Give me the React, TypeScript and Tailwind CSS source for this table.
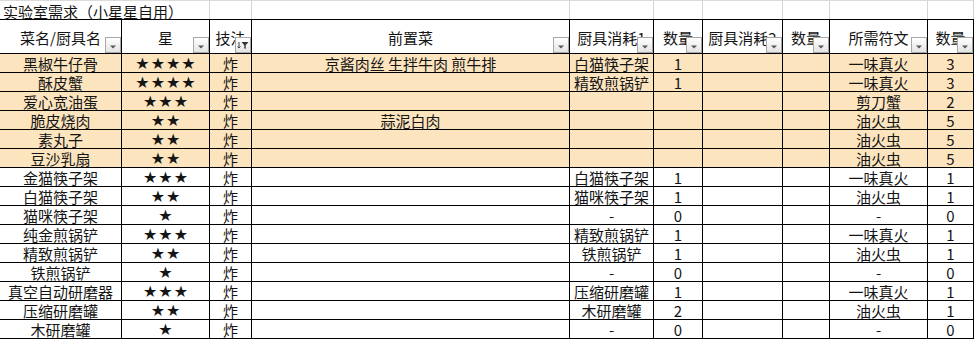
import React from "react";

type Row = {
  name: string;
  stars: number;
  method: string;
  pre: string;
  tool1: string;
  qty1: string;
  tool2: string;
  qty2: string;
  rune: string;
  runeQty: string;
  hl?: boolean;
};

const ROWS: Row[] = [
  { name: "黑椒牛仔骨", stars: 4, method: "炸", pre: "京酱肉丝 生拌牛肉 煎牛排", tool1: "白猫筷子架", qty1: "1", tool2: "", qty2: "", rune: "一味真火", runeQty: "3", hl: true },
  { name: "酥皮蟹", stars: 4, method: "炸", pre: "", tool1: "精致煎锅铲", qty1: "1", tool2: "", qty2: "", rune: "一味真火", runeQty: "3", hl: true },
  { name: "爱心宽油蛋", stars: 3, method: "炸", pre: "", tool1: "", qty1: "", tool2: "", qty2: "", rune: "剪刀蟹", runeQty: "2", hl: true },
  { name: "脆皮烧肉", stars: 2, method: "炸", pre: "蒜泥白肉", tool1: "", qty1: "", tool2: "", qty2: "", rune: "油火虫", runeQty: "5", hl: true },
  { name: "素丸子", stars: 2, method: "炸", pre: "", tool1: "", qty1: "", tool2: "", qty2: "", rune: "油火虫", runeQty: "5", hl: true },
  { name: "豆沙乳扇", stars: 2, method: "炸", pre: "", tool1: "", qty1: "", tool2: "", qty2: "", rune: "油火虫", runeQty: "5", hl: true },
  { name: "金猫筷子架", stars: 3, method: "炸", pre: "", tool1: "白猫筷子架", qty1: "1", tool2: "", qty2: "", rune: "一味真火", runeQty: "1" },
  { name: "白猫筷子架", stars: 2, method: "炸", pre: "", tool1: "猫咪筷子架", qty1: "1", tool2: "", qty2: "", rune: "油火虫", runeQty: "1" },
  { name: "猫咪筷子架", stars: 1, method: "炸", pre: "", tool1: "-", qty1: "0", tool2: "", qty2: "", rune: "-", runeQty: "0" },
  { name: "纯金煎锅铲", stars: 3, method: "炸", pre: "", tool1: "精致煎锅铲", qty1: "1", tool2: "", qty2: "", rune: "一味真火", runeQty: "1" },
  { name: "精致煎锅铲", stars: 2, method: "炸", pre: "", tool1: "铁煎锅铲", qty1: "1", tool2: "", qty2: "", rune: "油火虫", runeQty: "1" },
  { name: "铁煎锅铲", stars: 1, method: "炸", pre: "", tool1: "-", qty1: "0", tool2: "", qty2: "", rune: "-", runeQty: "0" },
  { name: "真空自动研磨器", stars: 3, method: "炸", pre: "", tool1: "压缩研磨罐", qty1: "1", tool2: "", qty2: "", rune: "一味真火", runeQty: "1" },
  { name: "压缩研磨罐", stars: 2, method: "炸", pre: "", tool1: "木研磨罐", qty1: "2", tool2: "", qty2: "", rune: "油火虫", runeQty: "1" },
  { name: "木研磨罐", stars: 1, method: "炸", pre: "", tool1: "-", qty1: "0", tool2: "", qty2: "", rune: "-", runeQty: "0" },
];

// column widths, each includes its 1px right border
const W = [
  "w-[122px]",
  "w-[88px]",
  "w-[42px]",
  "w-[318px]",
  "w-[84px]",
  "w-[49px]",
  "w-[80px]",
  "w-[47px]",
  "w-[98px]",
  "w-[46px]",
];

const HEADERS = ["菜名/厨具名", "星", "技法", "前置菜", "厨具消耗1", "数量", "厨具消耗2", "数量", "所需符文", "数量"];

function FilterButton({ active }: { active?: boolean }) {
  return (
    <div className="absolute right-0 bottom-0 w-[16px] h-[16px] border border-[#a9a9a9] bg-gradient-to-b from-white to-[#e4e4e4] flex items-center justify-center">
      {active ? (
        <svg width="12" height="10" viewBox="0 0 12 10">
          <path d="M2 2 V8 M0.5 6.5 L2 8 L3.5 6.5" stroke="#444" strokeWidth="1" fill="none" />
          <path d="M4.5 2 H11.5 L8.7 5.2 V9 L7.3 8.2 V5.2 Z" fill="#333" />
        </svg>
      ) : (
        <svg width="8" height="8" viewBox="0 0 8 8" className="mt-[3px]">
          <path d="M1 2.5 H7 L4 5.5 Z" fill="#555" />
        </svg>
      )}
    </div>
  );
}

function Stars({ n }: { n: number }) {
  return (
    <span className="text-[16px] leading-[18px] tracking-[1px] pl-[1px] font-[DejaVu_Sans,sans-serif]">
      {"★".repeat(n)}
    </span>
  );
}

export default function App() {
  return (
    <div className="w-[974px] h-[339px] overflow-hidden bg-white text-[#151515] font-[Noto_Sans_CJK_SC,sans-serif] text-[15px] leading-[18px]">
      {/* title row */}
      <div className="flex h-[19px] border-t border-[#dadada]">
        {W.map((w, i) => (
          <div
            key={i}
            className={`${w} shrink-0 h-full ${i === 0 ? "border-r border-transparent relative" : "border-r border-[#d4d4d4]"}`}
          >
            {i === 0 && (
              <span className="absolute left-[3px] top-[2px] whitespace-nowrap z-10">实验室需求（小星星自用）</span>
            )}
          </div>
        ))}
      </div>

      {/* header row */}
      <div className="flex h-[35px] border-y border-black">
        {HEADERS.map((h, i) => (
          <div
            key={i}
            className={`${W[i]} shrink-0 relative border-r border-black flex items-center justify-center pt-[2px] whitespace-nowrap overflow-hidden`}
          >
            <span>{h}</span>
            <FilterButton active={i === 2} />
          </div>
        ))}
      </div>

      {/* data rows */}
      {ROWS.map((r) => {
        const cells: React.ReactNode[] = [
          r.name,
          <Stars n={r.stars} />,
          r.method,
          r.pre,
          r.tool1,
          r.qty1,
          r.tool2,
          r.qty2,
          r.rune,
          r.runeQty,
        ];
        return (
          <div key={r.name} className={`flex h-[19px] border-b border-black ${r.hl ? "bg-[#fce4be]" : "bg-white"}`}>
            {cells.map((c, i) => (
              <div
                key={i}
                className={`${W[i]} shrink-0 border-r border-black flex items-center justify-center pt-[2px] whitespace-nowrap`}
              >
                {c}
              </div>
            ))}
          </div>
        );
      })}
    </div>
  );
}
